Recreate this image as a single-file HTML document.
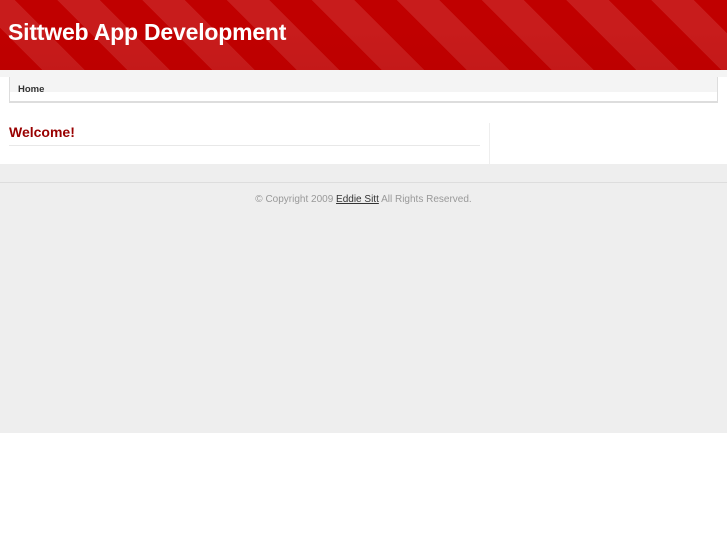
<!DOCTYPE html>
<html><head><style>
*{margin:0;padding:0}
body{width:727px;height:545px;background:#fff;font-family:"Liberation Sans",sans-serif;position:relative;overflow:hidden}
#hd{position:absolute;left:0;top:0;width:727px;height:70px;background:repeating-linear-gradient(45deg,#c00000 0 30px,#c81c1c 30px 60px);}
#hd:after{content:"";position:absolute;left:0;top:0;right:0;bottom:0;background:linear-gradient(#0000 40%,#a000001a)}
#hd h1{position:absolute;left:8px;top:19px;color:#fff;font-size:23px;font-weight:bold;z-index:2;letter-spacing:-0.2px}
#band{position:absolute;left:0;top:70px;width:727px;height:7px;background:#f4f4f4}
#nav{position:absolute;left:9px;top:77px;width:707px;height:24px;background:#fff;border:1px solid #ddd;border-top:none;border-bottom:2px solid #ddd}
#nav .g{position:absolute;left:0;top:0;right:0;height:15px;background:#f4f4f4}
#nav span{position:absolute;left:8px;top:7px;font-size:9.5px;font-weight:bold;color:#333}
h2{position:absolute;left:9px;top:124px;color:#990000;font-size:14px}
#hr{position:absolute;left:9px;top:145px;width:471px;height:1px;background:#e8e8e8}
#vr{position:absolute;left:489px;top:123px;width:1px;height:41px;background:#eee}
#ft{position:absolute;left:0;top:164px;width:727px;height:269px;background:#eee}
#ft .l{position:absolute;left:0;top:18px;width:727px;height:1px;background:#ddd}
#ft p{position:absolute;left:0;width:727px;top:30px;text-align:center;font-size:10px;color:#999}
#ft a{color:#333;text-decoration:underline}
</style></head><body>
<div id="hd"><h1>Sittweb App Development</h1></div>
<div id="band"></div>
<div id="nav"><div class="g"></div><span>Home</span></div>
<h2>Welcome!</h2>
<div id="hr"></div><div id="vr"></div>
<div id="ft"><div class="l"></div><p>© Copyright 2009 <a>Eddie Sitt</a> All Rights Reserved.</p></div>
</body></html>
